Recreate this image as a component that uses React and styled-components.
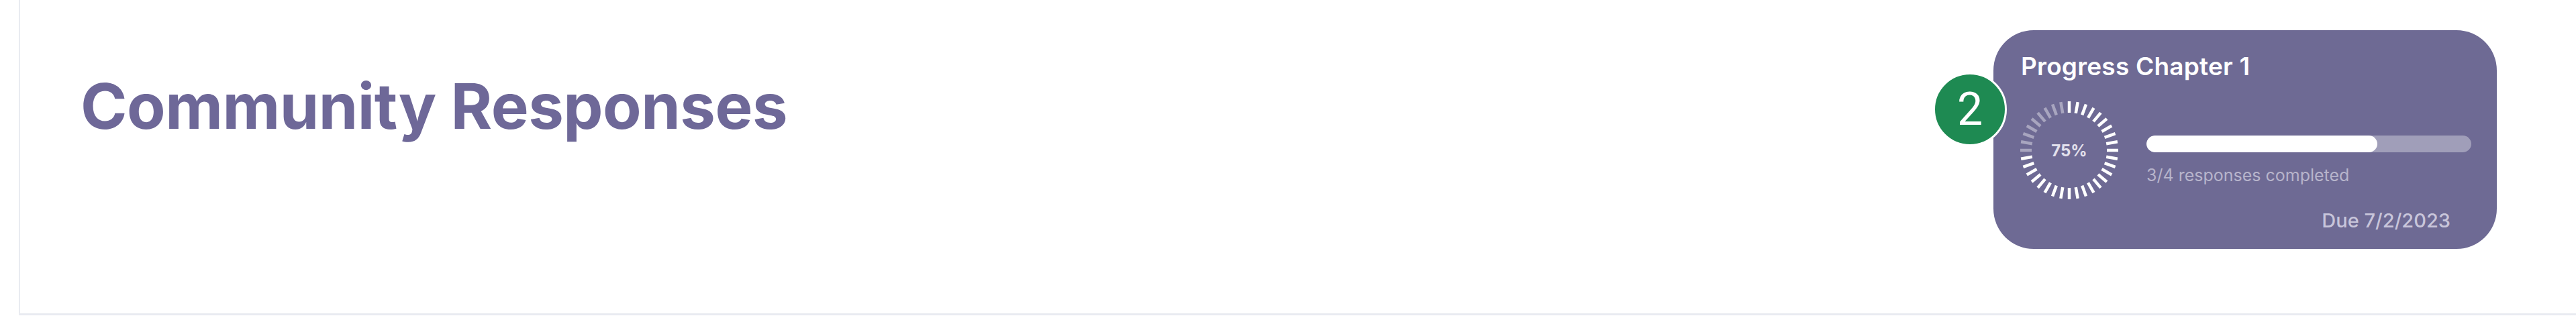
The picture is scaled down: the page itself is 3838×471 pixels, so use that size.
import styled, { createGlobalStyle } from "styled-components";

const GlobalStyle = createGlobalStyle`
  body {
    margin: 0;
    background: #ffffff;
    font-family: Inter, "Noto Sans", sans-serif;
  }
`;

const Panel = styled.section`
  box-sizing: border-box;
  height: 470px;
  margin-left: 28px;
  padding: 45px 118px 0 90px;
  border-left: 2px solid #e9ebf1;
  border-bottom: 3px solid #e9ebf1;
  display: flex;
  justify-content: space-between;
  align-items: flex-start;
`;

const Title = styled.h1`
  margin: 66px 0 0;
  font-size: 94px;
  line-height: 1;
  font-weight: 700;
  letter-spacing: -0.5px;
  color: #6e6898;
`;

const Card = styled.div`
  position: relative;
  box-sizing: border-box;
  width: 750px;
  height: 326px;
  padding: 35px 38px 0 39px;
  border-radius: 60px;
  background: #6e6a94;
  display: flex;
  flex-direction: column;
`;

const CardTitle = styled.div`
  padding-left: 2px;
  font-size: 37px;
  line-height: 1;
  font-weight: 600;
  letter-spacing: 0.2px;
  color: #ffffff;
`;

const Body = styled.div`
  margin-top: 33px;
  display: flex;
  align-items: flex-start;
  gap: 41px;
`;

const Ring = styled.div`
  position: relative;
  width: 148px;
  height: 148px;
  flex: none;
  display: flex;
  align-items: center;
  justify-content: center;
`;

const RingLabel = styled.span`
  position: absolute;
  font-size: 24px;
  font-weight: 700;
  color: #e2e0ec;
`;

const Details = styled.div`
  flex: 1;
  padding-top: 52px;
  display: flex;
  flex-direction: column;
  gap: 22px;
`;

const Track = styled.div`
  height: 25px;
  border-radius: 13px;
  background: rgba(255, 255, 255, 0.35);
  overflow: hidden;
`;

const Fill = styled.div`
  height: 100%;
  border-radius: 13px;
  background: #ffffff;
`;

const Caption = styled.div`
  font-size: 25px;
  line-height: 1;
  color: #b7b4cb;
`;

const Due = styled.div`
  margin-top: 16px;
  margin-right: 31px;
  align-self: flex-end;
  font-size: 29px;
  line-height: 1;
  font-weight: 500;
  color: #c8c5da;
`;

const Badge = styled.div`
  position: absolute;
  left: -90px;
  top: 63px;
  box-sizing: border-box;
  width: 110px;
  height: 110px;
  border-radius: 50%;
  border: 3px solid #ffffff;
  background: #1e8a52;
  color: #ffffff;
  font-family: Roboto, sans-serif;
  font-size: 68px;
  display: flex;
  align-items: center;
  justify-content: center;
`;

function TickRing({ percent }) {
  const count = 36;
  const lit = Math.round((count * percent) / 100);
  const ticks = [];
  for (let i = 0; i < count; i++) {
    const a = (i * 2 * Math.PI) / count;
    const s = Math.sin(a);
    const c = Math.cos(a);
    ticks.push(
      <line
        key={i}
        x1={74 + s * 56}
        y1={74 - c * 56}
        x2={74 + s * 73}
        y2={74 - c * 73}
        stroke={i < lit ? "#ffffff" : "rgba(255,255,255,0.4)"}
        strokeWidth="4.5"
      />
    );
  }
  return (
    <svg width="148" height="148" viewBox="0 0 148 148">
      {ticks}
    </svg>
  );
}

export default function App() {
  const done = 3;
  const total = 4;
  const percent = (done / total) * 100;

  return (
    <>
      <GlobalStyle />
      <Panel>
        <Title>Community Responses</Title>
        <Card>
          <Badge>2</Badge>
          <CardTitle>Progress Chapter 1</CardTitle>
          <Body>
            <Ring>
              <TickRing percent={percent} />
              <RingLabel>{percent}%</RingLabel>
            </Ring>
            <Details>
              <Track>
                <Fill style={{ width: `${percent - 4}%` }} />
              </Track>
              <Caption>
                {done}/{total} responses completed
              </Caption>
            </Details>
          </Body>
          <Due>Due 7/2/2023</Due>
        </Card>
      </Panel>
    </>
  );
}
